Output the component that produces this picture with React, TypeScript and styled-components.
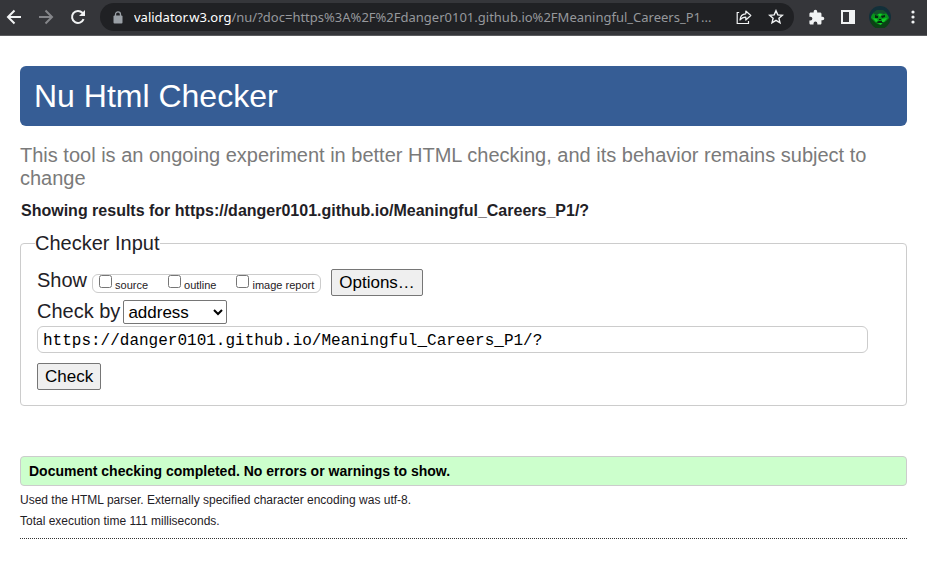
import React from "react";
import styled, { createGlobalStyle } from "styled-components";

const GlobalStyle = createGlobalStyle`
  *, *::before, *::after { box-sizing: border-box; }
  body {
    margin: 0;
    background: #fff;
    color: #1f2126;
    font-family: "Liberation Sans", Arial, sans-serif;
  }
`;

const BrowserBar = styled.header`
  display: flex;
  align-items: center;
  height: 36px;
  padding: 0 12px 1px 6px;
  background: #35363a;
  border-bottom: 1px solid #5a5b5e;
`;

const BarButton = styled.button<{ $gap?: number; $muted?: boolean }>`
  display: flex;
  flex: none;
  padding: 0;
  margin-left: ${(p) => p.$gap ?? 0}px;
  border: 0;
  background: none;
  color: ${(p) => (p.$muted ? "#85868a" : "#f1f3f4")};
`;

const AddressBar = styled.div`
  display: flex;
  flex: 1;
  align-items: center;
  min-width: 0;
  height: 28px;
  margin-left: 14px;
  padding: 0 10px 0 13px;
  border-radius: 14px;
  background: #202124;
  color: #9aa0a6;
`;

const Address = styled.span`
  flex: 1;
  min-width: 0;
  margin-left: 11px;
  overflow: hidden;
  font: 13px/20px "Noto Sans", "Segoe UI", sans-serif;
  color: #96989c;
  white-space: nowrap;
`;

const Host = styled.span`
  color: #fff;
`;

const Page = styled.main`
  padding: 30px 20px 0;
`;

const Banner = styled.h1`
  margin: 0;
  padding: 10px 14px;
  border-radius: 6px;
  background: #365d95;
  color: #fff;
  font-size: 32px;
  font-weight: 400;
  line-height: 40px;
`;

const Tagline = styled.p`
  margin: 18px 0 0;
  color: #7a7a7a;
  font-size: 20px;
  line-height: 23px;
`;

const ResultsHeading = styled.h2`
  margin: 11px 0 0;
  padding-left: 1px;
  font-size: 16px;
  line-height: 20px;
`;

const Checker = styled.fieldset`
  min-width: 0;
  margin: 10px 0 0;
  padding: 14px 38px 15px 16px;
  border: 1px solid #ccc;
  border-radius: 4px;
  font-size: 20px;
`;

const Legend = styled.legend`
  margin-left: -2px;
  padding: 0;
  line-height: 24px;
`;

const Row = styled.div<{ $top?: number }>`
  display: flex;
  align-items: flex-start;
  margin-top: ${(p) => p.$top ?? 0}px;
  line-height: 23px;
`;

const ShowOptions = styled.div`
  display: flex;
  align-items: center;
  gap: 20px;
  height: 19px;
  margin: 5px 10px 0 5px;
  padding: 0 6px;
  border: 1px solid #ccc;
  border-radius: 6px;
`;

const CheckLabel = styled.label`
  display: flex;
  align-items: flex-end;
  gap: 3px;
  height: 17px;
  font-size: 11px;
  line-height: 14px;
`;

const CheckBox = styled.input`
  align-self: flex-start;
  width: 13px;
  height: 13px;
  margin: 0;
`;

const Button = styled.button`
  height: 27px;
  padding: 0 7px;
  border: 1px solid #767676;
  border-radius: 2px;
  background: #efefef;
  color: #000;
  font: 17px/20px "Liberation Sans", Arial, sans-serif;
`;

const MethodSelect = styled.select`
  width: 104px;
  height: 24px;
  margin-left: 3px;
  border: 1px solid #767676;
  border-radius: 2px;
  background: #fff;
  color: #000;
  font: 17px/20px "Liberation Sans", Arial, sans-serif;
`;

const DocInput = styled.input`
  display: block;
  width: 100%;
  height: 27px;
  margin-top: 2px;
  padding: 3px 5px 1px;
  border: 1px solid #ccc;
  border-radius: 6px;
  color: #000;
  font: 16px/20px "Liberation Mono", monospace;
`;

const Success = styled.p`
  margin: 50px 0 0;
  padding: 4px 8px;
  border: 1px solid #ccc;
  border-radius: 4px;
  background: #cfc;
  color: #000;
  font-size: 14px;
  font-weight: 700;
  line-height: 20px;
`;

const Details = styled.div`
  padding: 4px 0 6px;
  border-bottom: 1px dotted #333;
  font-size: 12px;
  line-height: 21px;
`;

const Detail = styled.p`
  margin: 0;
`;

const stroke = { fill: "none", stroke: "currentColor" } as const;

const BackIcon = () => (
  <svg width="16" height="16" viewBox="0 0 16 16" {...stroke} strokeWidth="2">
    <path d="M15 8H2.5M8.500 1.500 2 8l6.500 6.500" />
  </svg>
);

const ForwardIcon = () => (
  <svg width="16" height="16" viewBox="0 0 16 16" {...stroke} strokeWidth="2">
    <path d="M1 8h12.500M7.500 1.500 14 8l-6.500 6.500" />
  </svg>
);

const ReloadIcon = () => (
  <svg width="16" height="16" viewBox="0 0 16 16">
    <path d="M13.600 10.200A6 6 0 1 1 12.400 3.800L14 5.400" {...stroke} strokeWidth="2" />
    <path d="M15 1v6H9z" fill="currentColor" />
  </svg>
);

const LockIcon = () => (
  <svg width="10" height="13" viewBox="0 0 10 13">
    <path d="M2.500 5.500V3.400a2.500 2.500 0 0 1 5 0v2.100" {...stroke} strokeWidth="1.300" />
    <rect x="0.500" y="4.500" width="9" height="8" rx="1" fill="currentColor" />
  </svg>
);

const ShareIcon = () => (
  <svg width="16" height="16" viewBox="0 0 16 16" {...stroke} strokeWidth="1.200">
    <path d="M3.200 3.500H1.200v11h11.300V12" />
    <path d="M4 11C4.300 7 6.200 5 9.800 4.800V2l5 4.500-5 4.500V8.200C7 8.200 5.500 9 4 11Z" strokeLinejoin="round" />
  </svg>
);

const StarIcon = () => (
  <svg width="16" height="16" viewBox="0 0 16 16" {...stroke} strokeWidth="1.400">
    <path d="m8 1.700 1.800 4.200 4.600.4-3.500 3 1.100 4.500L8 11.400l-4 2.400 1.100-4.500-3.500-3 4.600-.4Z" />
  </svg>
);

const PuzzleIcon = () => (
  <svg width="17" height="17" viewBox="0 0 24 24" fill="currentColor">
    <path d="M20.500 11H19V7c0-1.100-.9-2-2-2h-4V3.500a2.500 2.500 0 0 0-5 0V5H4c-1.100 0-2 .9-2 2v3.800h1.500a2.700 2.700 0 0 1 0 5.400H2V20c0 1.100.9 2 2 2h3.800v-1.500a2.700 2.700 0 0 1 5.400 0V22H17c1.100 0 2-.9 2-2v-4h1.500a2.500 2.500 0 0 0 0-5z" />
  </svg>
);

const PanelIcon = () => (
  <svg width="14" height="14" viewBox="0 0 14 14">
    <path d="M0 0h14v14H0zM2 2v10h6V2z" fill="currentColor" fillRule="evenodd" />
  </svg>
);

const Avatar = () => (
  <svg width="22" height="22" viewBox="0 0 22 22">
    <circle cx="11" cy="11" r="11" fill="#12303a" />
    <path d="M1 13a10 10 0 0 0 20 0l-4-2H5z" fill="#0b4215" />
    <path d="M2 12c0-4 4-7 8-8 5 0 9 4 10 8l-3 3-3 2-3 2-4-2-3-3z" fill="#08951c" />
    <path d="m4 7 4-3 6 0 4 3-3 1-4-1-4 2z" fill="#15502c" />
    <path d="m6 9 3 1v2l-3 0zm6 1 4-1v2l-3 1zm-2 3h2v1h-2zm-3 3 3-1h3l2 1-2 1-4 0z" fill="#062611" />
    <path d="M9 8h4l-2 3zM4 12l4 1 1 2-2 1zm9 1 5-1-3 4-2 0zM9 17h4l-1 2z" fill="#13cf27" />
  </svg>
);

const MenuIcon = () => (
  <svg width="4" height="14" viewBox="0 0 4 14" fill="currentColor">
    <circle cx="2" cy="2" r="1.600" />
    <circle cx="2" cy="7" r="1.600" />
    <circle cx="2" cy="12" r="1.600" />
  </svg>
);

const reports = ["source", "outline", "image report"];

export default function App() {
  return (
    <>
      <GlobalStyle />
      <BrowserBar>
        <BarButton aria-label="Back"><BackIcon /></BarButton>
        <BarButton aria-label="Forward" $gap={16} $muted><ForwardIcon /></BarButton>
        <BarButton aria-label="Reload" $gap={16}><ReloadIcon /></BarButton>
        <AddressBar>
          <LockIcon />
          <Address>
            <Host>validator.w3.org</Host>
            /nu/?doc=https%3A%2F%2Fdanger0101.github.io%2FMeaningful_Careers_P1...
          </Address>
          <BarButton aria-label="Share" $gap={8}><ShareIcon /></BarButton>
          <BarButton aria-label="Bookmark" $gap={16}><StarIcon /></BarButton>
        </AddressBar>
        <BarButton aria-label="Extensions" $gap={14}><PuzzleIcon /></BarButton>
        <BarButton aria-label="Side panel" $gap={16}><PanelIcon /></BarButton>
        <BarButton aria-label="Profile" $gap={14}><Avatar /></BarButton>
        <BarButton aria-label="Menu" $gap={20}><MenuIcon /></BarButton>
      </BrowserBar>
      <Page>
        <Banner>Nu Html Checker</Banner>
        <Tagline>
          This tool is an ongoing experiment in better HTML checking, and its behavior remains subject to change
        </Tagline>
        <ResultsHeading>
          Showing results for https://danger0101.github.io/Meaningful_Careers_P1/?
        </ResultsHeading>
        <Checker>
          <Legend>Checker Input</Legend>
          <Row>
            <span>Show</span>
            <ShowOptions>
              {reports.map((name) => (
                <CheckLabel key={name}>
                  <CheckBox type="checkbox" />
                  {name}
                </CheckLabel>
              ))}
            </ShowOptions>
            <Button type="button">Options…</Button>
          </Row>
          <Row $top={4}>
            <label htmlFor="method">Check by</label>
            <MethodSelect id="method" defaultValue="address">
              <option value="address">address</option>
              <option value="file">file upload</option>
              <option value="text">text input</option>
            </MethodSelect>
          </Row>
          <DocInput
            aria-label="Address"
            type="url"
            defaultValue="https://danger0101.github.io/Meaningful_Careers_P1/?"
          />
          <Row $top={10}>
            <Button type="submit">Check</Button>
          </Row>
        </Checker>
        <Success>Document checking completed. No errors or warnings to show.</Success>
        <Details>
          <Detail>Used the HTML parser. Externally specified character encoding was utf-8.</Detail>
          <Detail>Total execution time 111 milliseconds.</Detail>
        </Details>
      </Page>
    </>
  );
}
